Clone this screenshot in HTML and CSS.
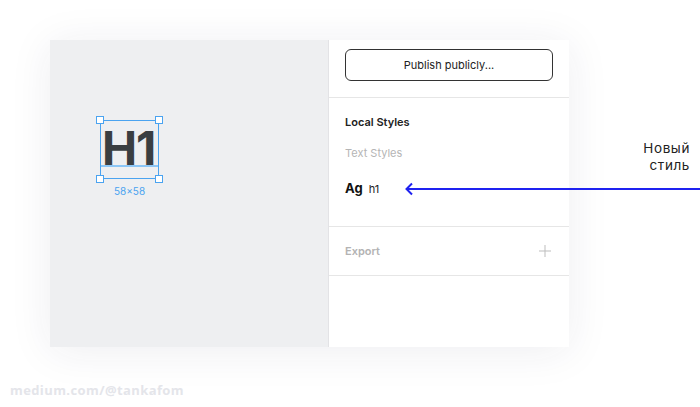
FILE: index.html
```html
<!DOCTYPE html>
<html lang="en">
<head>
    <meta charset="UTF-8">
    <title>Local Styles</title>
    <link rel="stylesheet" href="styles.css">
</head>
<body>
    <div class="stage">
        <div class="window">
            <div class="canvas">
                <div class="frame">
                    <span class="frame-text">H1</span>
                    <span class="baseline"></span>
                    <span class="handle tl"></span>
                    <span class="handle tr"></span>
                    <span class="handle bl"></span>
                    <span class="handle br"></span>
                    <span class="size-label">58×58</span>
                </div>
            </div>
            <div class="panel">
                <div class="panel-section publish">
                    <button class="publish-btn">Publish publicly...</button>
                </div>
                <div class="panel-section styles">
                    <div class="section-title">Local Styles</div>
                    <div class="sub-title">Text Styles</div>
                    <div class="style-row">
                        <span class="style-sample">Ag</span>
                        <span class="style-name">h1</span>
                    </div>
                </div>
                <div class="panel-section export">
                    <span class="export-title">Export</span>
                    <svg class="plus" width="12" height="12" viewBox="0 0 12 12">
                        <path d="M6 0 V12 M0 6 H12" stroke="#bdbdbd" stroke-width="1" fill="none"/>
                    </svg>
                </div>
            </div>
        </div>

        <div class="note">Новый<br>стиль</div>
        <svg class="arrow" width="296" height="14" viewBox="0 0 296 14">
            <path d="M2 7 H296" stroke="#1f22f0" stroke-width="2" fill="none"/>
            <path d="M8 1.5 L2.5 7 L8 12.5" stroke="#1f22f0" stroke-width="2" fill="none"/>
        </svg>

        <div class="watermark">medium.com/@tankafom</div>
    </div>
</body>
</html>
```

FILE: styles.css
```css
body {
    margin: 0;
    background: #ffffff;
    font-family: Inter, "Noto Sans", sans-serif;
}

.stage {
    position: relative;
    width: 700px;
    height: 407px;
    padding: 40px 0 0 50px;
    box-sizing: border-box;
    overflow: hidden;
}

.window {
    display: flex;
    width: 519px;
    height: 307px;
    background: #ffffff;
    box-shadow: 0 4px 40px rgba(40, 40, 80, 0.08);
}

.canvas {
    position: relative;
    width: 278px;
    background: #eeeff1;
    border-right: 1px solid #e3e3e6;
}

.frame {
    position: absolute;
    left: 50px;
    top: 80px;
    width: 57px;
    height: 57px;
    border: 1px solid #4aa3f0;
}

.frame-text {
    position: absolute;
    left: 1px;
    top: 1px;
    font-size: 47px;
    font-weight: 700;
    line-height: 52px;
    color: #3a3e41;
    letter-spacing: -1px;
}

.baseline {
    position: absolute;
    left: 0;
    right: 0;
    top: 44px;
    height: 2px;
    background: #8cc6f6;
}

.handle {
    position: absolute;
    width: 6px;
    height: 6px;
    background: #ffffff;
    border: 1px solid #4aa3f0;
}

.handle.tl { left: -5px; top: -5px; }
.handle.tr { right: -5px; top: -5px; }
.handle.bl { left: -5px; bottom: -5px; }
.handle.br { right: -5px; bottom: -5px; }

.size-label {
    position: absolute;
    left: 0;
    right: 0;
    top: 64px;
    text-align: center;
    font-size: 10px;
    color: #4aa3f0;
}

.panel {
    flex: 1;
    display: flex;
    flex-direction: column;
}

.panel-section {
    border-bottom: 1px solid #e6e6e6;
    padding: 0 16px;
}

.publish {
    padding-top: 9px;
    height: 48px;
}

.publish-btn {
    width: 208px;
    height: 32px;
    border: 1px solid #333333;
    border-radius: 6px;
    background: #ffffff;
    font-family: Inter, "Noto Sans", sans-serif;
    font-size: 11px;
    color: #222222;
}

.styles {
    height: 129px;
    padding-top: 17px;
    box-sizing: border-box;
}

.section-title {
    font-size: 11px;
    font-weight: 600;
    color: #222222;
    line-height: 14px;
}

.sub-title {
    margin-top: 17px;
    font-size: 11px;
    color: #b5b5b5;
    line-height: 14px;
}

.style-row {
    display: flex;
    align-items: baseline;
    gap: 6px;
    margin-top: 20px;
}

.style-sample {
    font-size: 13px;
    font-weight: 700;
    color: #111111;
}

.style-name {
    font-size: 11px;
    color: #222222;
}

.export {
    height: 48px;
    display: flex;
    align-items: center;
    justify-content: space-between;
}

.export-title {
    font-size: 11px;
    font-weight: 600;
    color: #b3b3b3;
}

.plus {
    margin-right: 2px;
}

.note {
    position: absolute;
    right: 10px;
    top: 140px;
    text-align: right;
    font-size: 13.5px;
    line-height: 17px;
    letter-spacing: 0.6px;
    color: #222222;
    font-family: Inter, sans-serif;
}

.arrow {
    position: absolute;
    left: 404px;
    top: 182px;
}

.watermark {
    position: absolute;
    left: 10px;
    top: 381px;
    font-size: 13px;
    font-weight: 700;
    letter-spacing: 0.4px;
    color: #e4e5ea;
    font-family: "Open Sans", sans-serif;
}
```
